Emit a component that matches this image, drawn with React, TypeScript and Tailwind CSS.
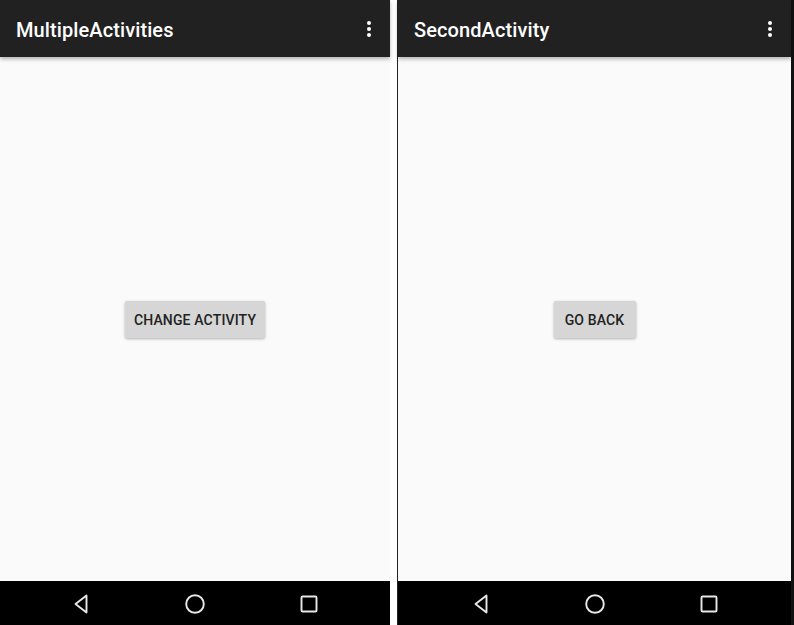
import type { ReactNode } from "react";

function MoreIcon() {
  return (
    <svg width="6" height="18" viewBox="0 0 6 18" className="block">
      <circle cx="3" cy="3" r="2" fill="#fff" />
      <circle cx="3" cy="9" r="2" fill="#fff" />
      <circle cx="3" cy="15" r="2" fill="#fff" />
    </svg>
  );
}

function NavBar() {
  return (
    <div className="h-[44px] bg-black flex items-center justify-center gap-[94px] pt-[2px]">
      <svg width="20" height="20" viewBox="0 0 20 20">
        <path d="M15.5 1.5 L4.5 10 L15.5 18.5 Z" fill="none" stroke="#e8e8e8" strokeWidth="1.9" strokeLinejoin="round" />
      </svg>
      <svg width="20" height="20" viewBox="0 0 20 20">
        <circle cx="10" cy="10" r="8.8" fill="none" stroke="#e8e8e8" strokeWidth="1.9" />
      </svg>
      <svg width="20" height="20" viewBox="0 0 20 20">
        <rect x="2.5" y="2.5" width="15" height="15" rx="1" fill="none" stroke="#e8e8e8" strokeWidth="1.9" />
      </svg>
    </div>
  );
}

function Phone({ title, children }: { title: string; children: ReactNode }) {
  return (
    <div className="flex flex-col h-full flex-1 bg-[#fafafa]">
      <div className="relative z-10 h-[57px] bg-[#212121] flex items-center justify-between pl-4 pr-[18px] shadow-[0_2px_4px_rgba(0,0,0,0.3)]">
        <span className="text-white text-[20px] font-medium tracking-[0.1px] pt-[2px]">{title}</span>
        <MoreIcon />
      </div>
      <div className="flex-1 flex items-center justify-center">{children}</div>
      <NavBar />
    </div>
  );
}

function RaisedButton({ label }: { label: string }) {
  return (
    <button className="h-[37px] min-w-[82px] px-[9px] pt-[2px] bg-[#d6d6d6] rounded-[2px] text-[14px] font-medium tracking-[0.15px] text-[#222] shadow-[0_1px_3px_rgba(0,0,0,0.3)]">
      {label}
    </button>
  );
}

export default function App() {
  return (
    <div className="w-[794px] h-[625px] flex bg-white font-['Roboto',sans-serif]">
      <div className="w-[390px] h-full flex">
        <Phone title="MultipleActivities">
          <RaisedButton label="CHANGE ACTIVITY" />
        </Phone>
      </div>
      <div className="w-[7px] bg-white" />
      <div className="w-[397px] h-full flex border-l border-[#222] border-r-[3px] border-r-[#111]">
        <Phone title="SecondActivity">
          <RaisedButton label="GO BACK" />
        </Phone>
      </div>
    </div>
  );
}
